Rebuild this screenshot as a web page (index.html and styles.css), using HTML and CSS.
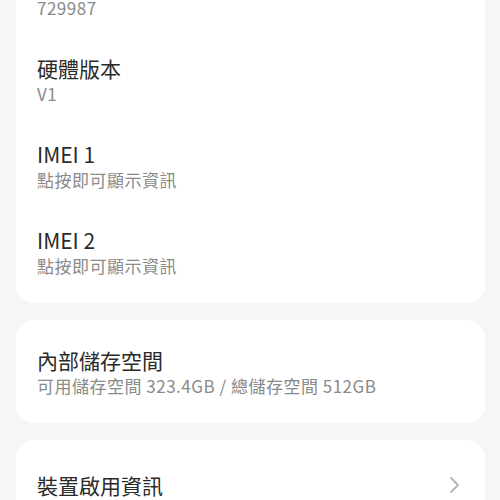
FILE: index.html
```html
<!DOCTYPE html>
<html lang="zh-Hant">
<head>
  <meta charset="UTF-8">
  <meta name="viewport" content="width=device-width, initial-scale=1.0">
  <title>我的裝置</title>
  <link rel="stylesheet" href="styles.css">
</head>
<body>
  <div class="page">
    <div class="card">
      <div class="row">
        <div class="title">版本號碼</div>
        <div class="sub">729987</div>
      </div>
      <div class="row">
        <div class="title">硬體版本</div>
        <div class="sub">V1</div>
      </div>
      <div class="row">
        <div class="title">IMEI 1</div>
        <div class="sub">點按即可顯示資訊</div>
      </div>
      <div class="row">
        <div class="title">IMEI 2</div>
        <div class="sub">點按即可顯示資訊</div>
      </div>
    </div>

    <div class="card storage">
      <div class="row">
        <div class="title">內部儲存空間</div>
        <div class="sub">可用儲存空間 323.4GB / 總儲存空間 512GB</div>
      </div>
    </div>

    <div class="card">
      <div class="row link">
        <div class="title">裝置啟用資訊</div>
        <svg class="chevron" width="12" height="20" viewBox="0 0 12 20">
          <path d="M2 3 L9 10 L2 17" fill="none" stroke="#b3b3b3" stroke-width="1.8" stroke-linecap="round" stroke-linejoin="round"/>
        </svg>
      </div>
    </div>
  </div>
</body>
</html>
```

FILE: styles.css
```css
* {
  box-sizing: border-box;
}
body {
  margin: 0;
  background: #f6f6f6;
  font-family: "Noto Sans CJK TC", "Noto Sans", sans-serif;
}
.page {
  display: flex;
  flex-direction: column;
  gap: 17px;
  padding: 0 15px 0 16px;
  margin-top: -57px;
}
.card {
  background: #fff;
  border-radius: 18px;
  padding: 8px 21px;
}
.row {
  padding: 17px 0;
}
.title {
  font-size: 21px;
  line-height: 28px;
  color: #2a2a2a;
}
.sub {
  font-size: 17px;
  line-height: 24px;
  letter-spacing: 0.5px;
  color: #8a8a8a;
}
.storage {
  padding: 9px 21px 8px;
}
.row.link {
  display: flex;
  align-items: center;
  justify-content: space-between;
  padding: 23px 0;
}
.chevron {
  margin-right: 3px;
}
```
